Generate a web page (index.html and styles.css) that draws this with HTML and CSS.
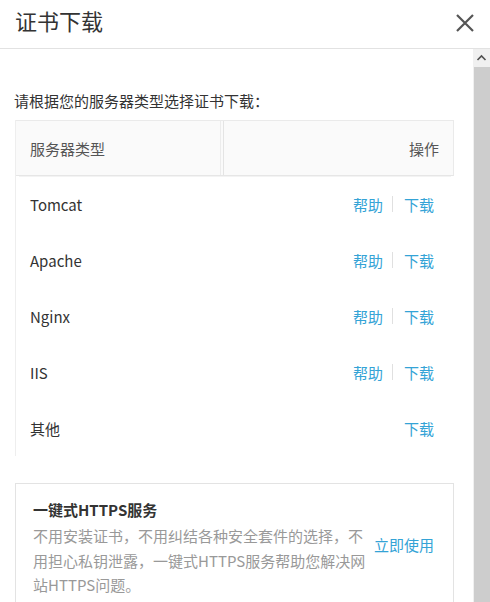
FILE: index.html
```html
<!DOCTYPE html>
<html lang="zh-CN">
<head>
<meta charset="utf-8">
<title>证书下载</title>
<link rel="stylesheet" href="styles.css">
</head>
<body>
<div class="dialog">
  <div class="header">
    <div class="title">证书下载</div>
    <div class="close">
      <svg width="20" height="20" viewBox="0 0 20 20"><path d="M2 2 L18 18 M18 2 L2 18" stroke="#555" stroke-width="2.2" fill="none"/></svg>
    </div>
  </div>
  <div class="main">
    <div class="content">
      <p class="intro">请根据您的服务器类型选择证书下载：</p>
      <div class="table">
        <div class="thead">
          <div class="th th-type">服务器类型</div>
          <div class="th th-op">操作</div>
        </div>
        <div class="row"><div class="name">Tomcat</div><div class="ops"><a class="link">帮助</a><span class="sep"></span><a class="link">下载</a></div></div>
        <div class="row"><div class="name">Apache</div><div class="ops"><a class="link">帮助</a><span class="sep"></span><a class="link">下载</a></div></div>
        <div class="row"><div class="name">Nginx</div><div class="ops"><a class="link">帮助</a><span class="sep"></span><a class="link">下载</a></div></div>
        <div class="row"><div class="name">IIS</div><div class="ops"><a class="link">帮助</a><span class="sep"></span><a class="link">下载</a></div></div>
        <div class="row"><div class="name">其他</div><div class="ops"><a class="link">下载</a></div></div>
      </div>
      <div class="card">
        <div class="card-text">
          <div class="card-title">一键式HTTPS服务</div>
          <div class="card-desc">不用安装证书，不用纠结各种安全套件的选择，不用担心私钥泄露，一键式HTTPS服务帮助您解决网站HTTPS问题。</div>
        </div>
        <a class="link use">立即使用</a>
      </div>
    </div>
    <div class="scrollbar">
      <div class="arrow">
        <svg width="17" height="18" viewBox="0 0 17 18"><path d="M4.5 11 L8.5 7 L12.5 11" stroke="#505050" stroke-width="1.6" fill="none"/></svg>
      </div>
      <div class="thumb"></div>
    </div>
  </div>
</div>
</body>
</html>
```
FILE: styles.css
```css
html, body {
  margin: 0;
  padding: 0;
  background: #fff;
}
body {
  width: 490px;
  height: 602px;
  overflow: hidden;
  font-family: "Noto Sans CJK SC", "Noto Sans", sans-serif;
  color: #333;
  font-size: 15px;
}
.dialog {
  display: flex;
  flex-direction: column;
  height: 602px;
}
.header {
  height: 49px;
  flex: none;
  display: flex;
  align-items: center;
  justify-content: space-between;
  border-bottom: 1px solid #e2e2e2;
  box-sizing: border-box;
  padding: 0 15px 8px 15px;
}
.title {
  font-size: 22px;
  line-height: 30px;
  color: #333;
}
.close {
  width: 20px;
  height: 20px;
  margin-top: 6px;
}
.close svg { display: block; }
.main {
  flex: 1;
  display: flex;
  min-height: 0;
}
.content {
  width: 473px;
  flex: none;
  padding: 0 0 0 15px;
  box-sizing: border-box;
  overflow: hidden;
}
.intro {
  margin: 42px 0 9px -1px;
  line-height: 20px;
  font-size: 15px;
  color: #333;
}
.table {
  width: 439px;
  border-left: 1px solid #eee;
  box-sizing: border-box;
}
.thead {
  display: flex;
  height: 56px;
  background: #fafafa;
  border-top: 1px solid #eaeaea;
  border-right: 1px solid #eaeaea;
  border-bottom: 1px solid #e6e6e6;
  box-sizing: border-box;
  box-shadow: 0 4px 0 -3px #f3f3f3;
}
.th {
  display: flex;
  align-items: center;
  color: #555;
}
.th-type {
  width: 205px;
  padding-left: 14px;
  box-sizing: border-box;
  border-right: 1px solid #ececec;
}
.th-op {
  flex: 1;
  justify-content: flex-end;
  padding-right: 14px;
  border-left: 1px solid #e4e4e4;
  margin-left: 2px;
}
.row {
  display: flex;
  height: 56px;
  align-items: center;
  justify-content: space-between;
  padding: 0 20px 0 14px;
}
.name { color: #333; }
.ops {
  display: flex;
  align-items: center;
}
.link {
  color: #34a3d6;
  cursor: pointer;
}
.sep {
  width: 1px;
  height: 16px;
  background: #e0e0e0;
  margin: 0 11px 0 9px;
}
.card {
  margin-top: 27px;
  width: 439px;
  box-sizing: border-box;
  border: 1px solid #e3e3e3;
  padding: 15px 19px 20px 17px;
  display: flex;
  align-items: center;
  justify-content: space-between;
}
.card-text {
  width: 336px;
}
.card-title {
  font-weight: bold;
  line-height: 22px;
  color: #333;
}
.card-desc {
  margin-top: 3px;
  color: #999;
  line-height: 24.5px;
}
.use {
  margin-top: -8px;
}
.scrollbar {
  width: 17px;
  flex: none;
  background: #f0f0f0;
  display: flex;
  flex-direction: column;
}
.arrow {
  height: 18px;
  flex: none;
}
.arrow svg { display: block; }
.thumb {
  flex: 1;
  margin-left: 1px;
  background: #cdcdcd;
}
```
